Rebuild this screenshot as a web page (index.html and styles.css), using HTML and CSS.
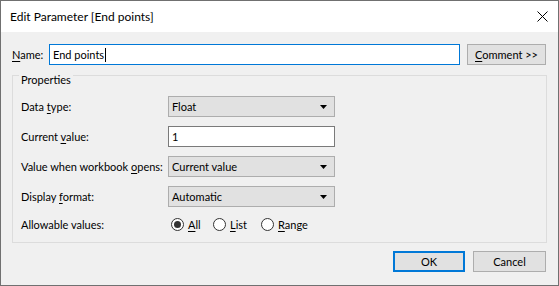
FILE: index.html
```html
<!DOCTYPE html>
<html>
<head>
	<meta charset="utf-8">
	<title>Edit Parameter [End points]</title>
	<link rel="stylesheet" href="styles.css">
</head>
<body>
	<div class="dialog">
		<div class="titlebar">
			<span class="title">Edit Parameter [End points]</span>
			<svg class="close" width="11" height="11" viewBox="0 0 11 11">
				<path d="M0.5 0.5 L10.5 10.5 M10.5 0.5 L0.5 10.5" stroke="#000" stroke-width="1" fill="none"/>
			</svg>
		</div>
		<div class="content">
			<div class="name-row">
				<label class="name-label"><u>N</u>ame:</label>
				<div class="textbox focused">End points<span class="caret"></span></div>
				<button class="btn comment"><u>C</u>omment &gt;&gt;</button>
			</div>
			<fieldset class="group">
				<legend>Properties</legend>
				<div class="form">
					<label>Data <u>t</u>ype:</label>
					<div class="select"><span>Float</span><svg width="7" height="4" viewBox="0 0 7 4"><path d="M0 0 H7 L3.5 4 Z" fill="#000"/></svg></div>

					<label>Current <u>v</u>alue:</label>
					<div class="textbox plain">1</div>

					<label>Value when workbook <u>o</u>pens:</label>
					<div class="select"><span>Current value</span><svg width="7" height="4" viewBox="0 0 7 4"><path d="M0 0 H7 L3.5 4 Z" fill="#000"/></svg></div>

					<label>Display <u>f</u>ormat:</label>
					<div class="select"><span>Automatic</span><svg width="7" height="4" viewBox="0 0 7 4"><path d="M0 0 H7 L3.5 4 Z" fill="#000"/></svg></div>

					<label>Allowable values:</label>
					<div class="radios">
						<span class="radio opt-all"><span class="dot checked"></span><span><u>A</u>ll</span></span>
						<span class="radio opt-list"><span class="dot"></span><span><u>L</u>ist</span></span>
						<span class="radio"><span class="dot"></span><span><u>R</u>ange</span></span>
					</div>
				</div>
			</fieldset>
			<div class="actions">
				<button class="btn ok">OK</button>
				<button class="btn cancel">Cancel</button>
			</div>
		</div>
	</div>
</body>
</html>
```

FILE: styles.css
```css
body
{
	margin: 0;
	font-family: Lato, "Liberation Sans", sans-serif;
	font-size: 11px;
	color: #000;
}
u
{
	text-decoration-thickness: 1px;
	text-underline-offset: 2px;
}
.dialog
{
	width: 559px;
	height: 286px;
	box-sizing: border-box;
	border: 1px solid #707070;
	background-color: #f0f0f0;
	display: flex;
	flex-direction: column;
}
.titlebar
{
	height: 31px;
	flex: none;
	background-color: #fff;
	display: flex;
	align-items: center;
	padding-left: 9px;
	padding-right: 10px;
}
.title
{
	flex: 1;
	font-size: 12px;
}
.close
{
	display: block;
}
.content
{
	padding: 12px 11px 0 11px;
}
.name-row
{
	display: flex;
	align-items: center;
	height: 21px;
}
.name-label
{
	width: 37px;
}
.textbox
{
	box-sizing: border-box;
	height: 21px;
	background-color: #fff;
	border: 1px solid #7a7a7a;
	padding-left: 3px;
	display: flex;
	align-items: center;
}
.textbox.focused
{
	width: 411px;
	border-color: #0078d7;
}
.caret
{
	width: 1px;
	height: 14px;
	background-color: #000;
	margin-left: 1px;
}
.btn
{
	box-sizing: border-box;
	height: 21px;
	font: inherit;
	color: #000;
	background-color: #e1e1e1;
	border: 1px solid #adadad;
	padding: 0;
}
.btn.comment
{
	width: 79px;
	margin-left: 7px;
}
.group
{
	margin: 0;
	border: 1px solid #dcdcdc;
	padding: 10px 0 9px 8px;
}
.group legend
{
	margin-left: -2px;
	padding: 8px 2px 0 2px;
	line-height: 13px;
}
.form
{
	display: grid;
	grid-template-columns: 147px 167px;
	grid-template-rows: 21px 21px 21px 21px 17px;
	row-gap: 9px;
	align-items: center;
}
.form label
{
	white-space: nowrap;
}
.select
{
	box-sizing: border-box;
	height: 21px;
	background-color: #e1e1e1;
	border: 1px solid #adadad;
	padding: 0 7px 0 3px;
	display: flex;
	align-items: center;
	justify-content: space-between;
}
.select svg
{
	display: block;
}
.radios
{
	display: flex;
	align-items: center;
	padding-left: 3px;
}
.radio
{
	display: flex;
	align-items: center;
	gap: 4px;
}
.radio.opt-all
{
	width: 42px;
}
.radio.opt-list
{
	width: 48px;
}
.dot
{
	box-sizing: border-box;
	width: 13px;
	height: 13px;
	border: 1px solid #333;
	border-radius: 50%;
	background-color: #fff;
	display: flex;
	align-items: center;
	justify-content: center;
}
.dot.checked::after
{
	content: "";
	width: 7px;
	height: 7px;
	border-radius: 50%;
	background-color: #333;
}
.actions
{
	display: flex;
	justify-content: flex-end;
	gap: 8px;
	margin-top: 8px;
	margin-right: 1px;
}
.btn.ok
{
	width: 72px;
	border: 2px solid #0078d7;
}
.btn.cancel
{
	width: 73px;
}
```
